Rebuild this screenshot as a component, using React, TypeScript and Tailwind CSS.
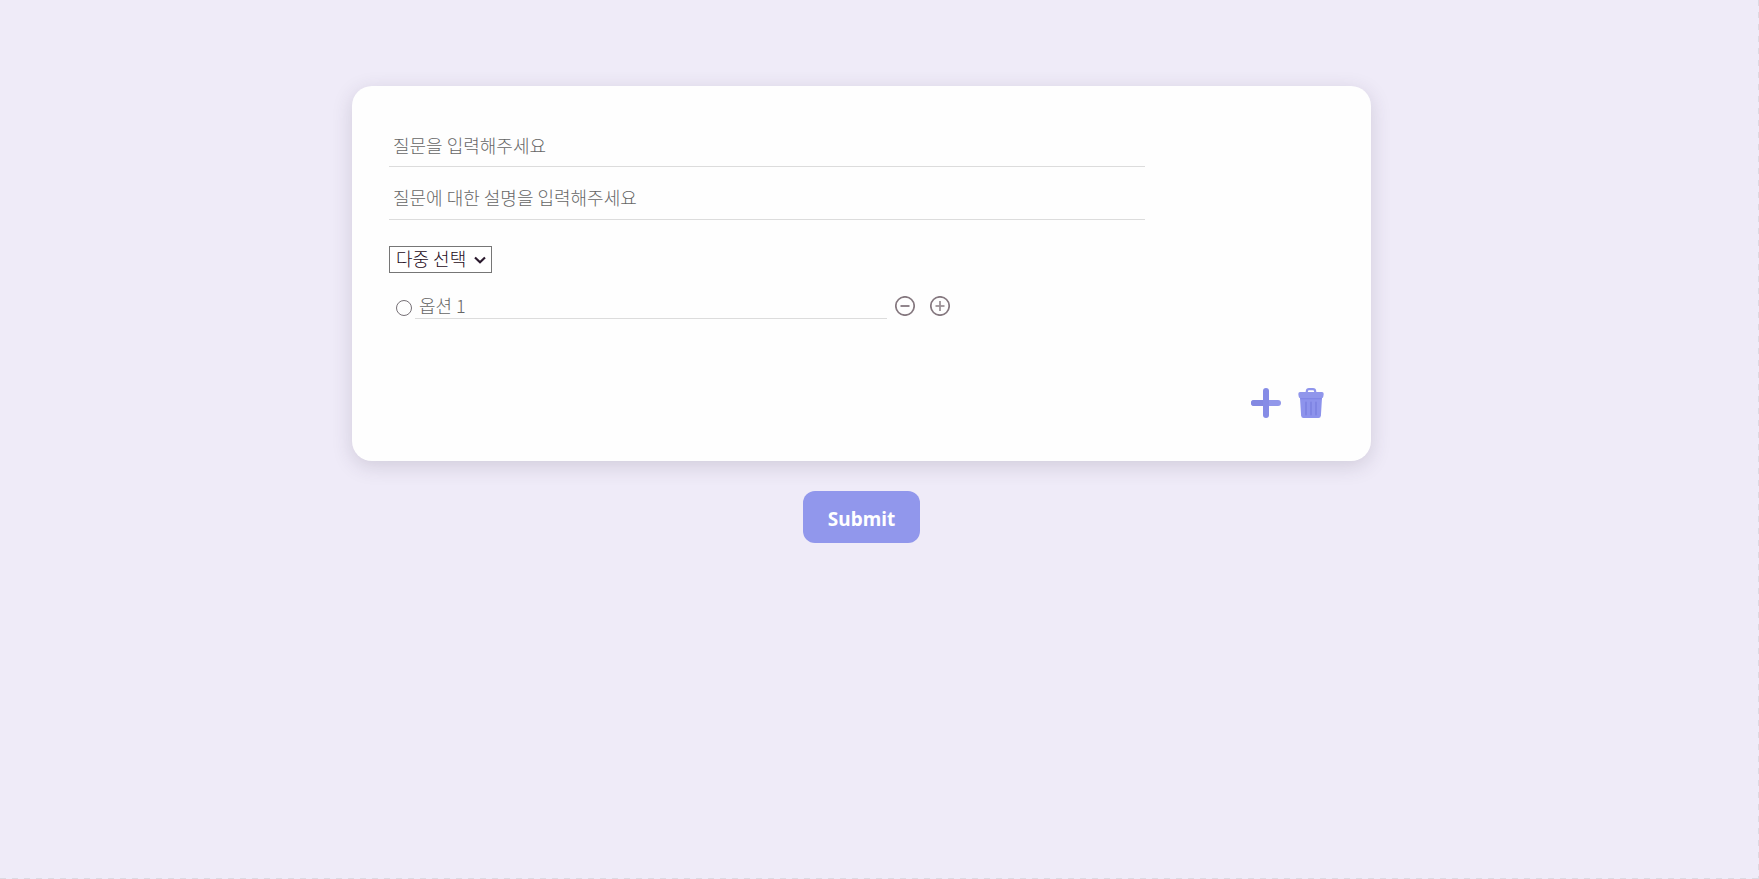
import { useState } from "react";

function CircleIcon({ plus = false }: { plus?: boolean }) {
  return (
    <svg viewBox="0 0 20 20" className="size-5" fill="none" aria-hidden="true">
      <circle cx="10" cy="10" r="9.2" stroke="#85787f" strokeWidth="1.7" />
      <path d="M5.5 10h9" stroke={plus ? "#9d9398" : "#85787f"} strokeWidth="1.8" />
      {plus && <path d="M10 5v10" stroke="#9d9398" strokeWidth="1.8" />}
    </svg>
  );
}

function PlusIcon() {
  return (
    <svg viewBox="0 0 30 30" className="size-[30px]" aria-hidden="true">
      <rect x="0" y="12" width="30" height="6" rx="3" fill="#9197ea" />
      <path d="M3 12h12v6H3a3 3 0 0 1 0-6z" fill="#8389e2" />
      <rect x="12" y="0" width="6" height="30" rx="3" fill="#868ce6" />
    </svg>
  );
}

function TrashIcon() {
  return (
    <svg viewBox="0 0 26 30" className="h-[30px] w-[26px]" aria-hidden="true">
      <path d="M8.8 5V3.4Q9 1.2 11 1.200h4Q17 1.200 17.200 3.400V5" fill="none" stroke="#8f95ec" strokeWidth="2.2" />
      <path d="M2 9.5h22l-1.1 18Q22.700 30 20.500 30H5.500Q3.300 30 3.100 27.500z" fill="#8d93ec" />
      <path d="M2 4h22q1.700 0 1.700 2l-.5 3q-.2 1-1.200 1H2Q1 10 .8 9L.3 6Q.3 4 2 4z" fill="#9096eb" />
      <path d="M2.200 10.700h21.600" stroke="#8086e6" strokeWidth="1.200" />
      <path d="M8 14.500v12M13 14.500v12M18 14.500v12" stroke="#7f85e3" strokeWidth="2" strokeLinecap="round" />
    </svg>
  );
}

const fieldClass =
  "block border-b border-[#dcdcdc] bg-transparent px-1 text-lg font-light text-[#2b1a2e] placeholder:text-[#666666] outline-none";

export default function App() {
  const [kind, setKind] = useState("multi");
  return (
    <main className="flex min-h-screen flex-col items-center bg-[#efebf8] bg-[image:repeating-linear-gradient(to_right,#dcd9e2_0_6px,transparent_6px_12px),repeating-linear-gradient(to_bottom,#dcd9e2_0_6px,transparent_6px_12px)] bg-[size:100%_1px,1px_100%] bg-[position:0_100%,100%_0] bg-no-repeat pt-[86px] pr-9 font-['Noto_Sans_CJK_KR','Noto_Sans',sans-serif] text-[#2b1a2e]">
      <form className="flex w-full flex-col items-center" onSubmit={(e) => e.preventDefault()}>
        <section className="w-full max-w-[1019px] rounded-[20px] bg-[#fefefe] px-[37px] pt-9 pb-[43px] shadow-[0_5px_20px_rgba(60,45,75,0.17)]">
          <input
            aria-label="질문"
            placeholder="질문을 입력해주세요"
            className={`${fieldClass} h-[45px] w-4/5 pt-0.5`}
          />
          <input
            aria-label="질문 설명"
            placeholder="질문에 대한 설명을 입력해주세요"
            className={`${fieldClass} mt-2 h-[45px] w-4/5`}
          />
          <div className="mt-[26px] grid h-[27px] w-[103px] items-center border border-[#767676] bg-white">
            <select
              aria-label="질문 유형"
              value={kind}
              onChange={(e) => setKind(e.target.value)}
              className="col-start-1 row-start-1 h-[25px] w-full appearance-none pb-1 pl-1.5 text-lg leading-5 font-light text-[#1c0a20]"
            >
              <option value="multi">다중 선택</option>
              <option value="text">주관식</option>
            </select>
            <svg
              viewBox="0 0 12 8"
              className="pointer-events-none col-start-1 row-start-1 mr-[5px] h-2 w-3 justify-self-end"
              fill="none"
              aria-hidden="true"
            >
              <path d="M1 1.500l5 4.700 5-4.700" stroke="#2b1a2e" strokeWidth="2.2" />
            </svg>
          </div>
          <div className="mt-5 flex h-[26px] items-center pl-[7px]">
            <input
              type="radio"
              aria-label="옵션 1 선택"
              className="mt-1 size-4 shrink-0 appearance-none rounded-full border border-[#767076] checked:border-[5px]"
            />
            <input
              aria-label="옵션 1"
              placeholder="옵션 1"
              className={`${fieldClass} ml-[3px] h-[26px] w-[472px] pb-0.5`}
            />
            <button type="button" aria-label="옵션 삭제" className="ml-2">
              <CircleIcon />
            </button>
            <button type="button" aria-label="옵션 추가" className="ml-[15px]">
              <CircleIcon plus />
            </button>
          </div>
          <div className="mt-[69px] flex justify-end gap-[17px] pr-[10px]">
            <button type="button" aria-label="질문 추가">
              <PlusIcon />
            </button>
            <button type="button" aria-label="질문 삭제">
              <TrashIcon />
            </button>
          </div>
        </section>
        <button
          type="submit"
          className="mt-[30px] h-[52px] w-[117px] rounded-xl bg-[#9197ec] pt-1 font-['Noto_Sans',sans-serif] text-[19px] font-bold text-white"
        >
          Submit
        </button>
      </form>
    </main>
  );
}
